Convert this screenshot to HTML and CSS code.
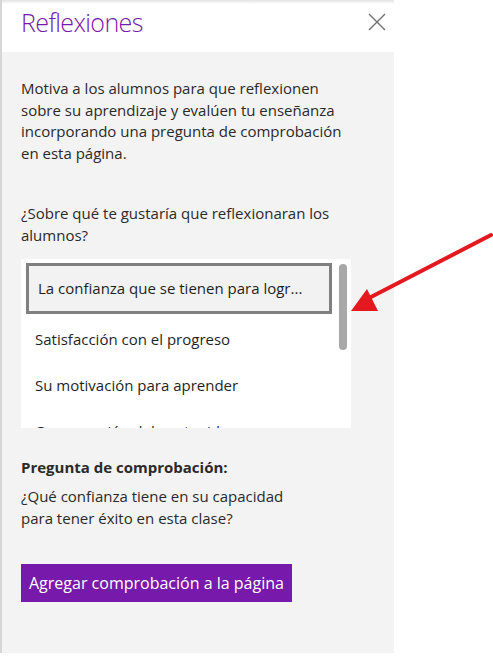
FILE: index.html
```html
<!DOCTYPE html>
<html lang="es">

<head>
    <meta charset="UTF-8">
    <meta name="viewport" content="width=device-width, initial-scale=1.0">
    <title>Reflexiones</title>
    <link rel="stylesheet" href="styles.css">
</head>

<body>
    <div class="pane">
        <div class="pane-head">
            <h1 class="pane-title">Reflexiones</h1>
            <button class="close" aria-label="Cerrar">
                <svg width="18" height="18" viewBox="0 0 18 18">
                    <path d="M1 1 L17 17 M17 1 L1 17" stroke="#707070" stroke-width="1.4" fill="none" />
                </svg>
            </button>
        </div>

        <div class="pane-body">
            <p class="intro">Motiva a los alumnos para que reflexionen sobre su aprendizaje y evalúen tu enseñanza incorporando una pregunta de comprobación en esta página.</p>

            <p class="ask">¿Sobre qué te gustaría que reflexionaran los alumnos?</p>

            <div class="choices">
                <ul class="choice-list">
                    <li class="choice selected">La confianza que se tienen para logr...</li>
                    <li class="choice">Satisfacción con el progreso</li>
                    <li class="choice">Su motivación para aprender</li>
                    <li class="choice">Comprensión del contenido</li>
                </ul>
                <div class="thumb"></div>
            </div>

            <h2 class="check-title">Pregunta de comprobación:</h2>
            <p class="check-text">¿Qué confianza tiene en su capacidad<br>para tener éxito en esta clase?</p>

            <button class="add">Agregar comprobación a la página</button>
        </div>
    </div>

    <!-- flecha roja de la captura -->
    <svg class="arrow" width="150" height="85" viewBox="0 0 150 85">
        <line x1="142" y1="4" x2="22" y2="66" stroke="#e3191f" stroke-width="4" stroke-linecap="round" />
        <polygon points="2,80 18,58 29,80" fill="#e3191f" />
    </svg>
</body>

</html>
```

FILE: styles.css
```css
* {
    margin: 0;
    padding: 0;
    box-sizing: border-box;
}

body {
    background-color: #fff;
    font-family: "Open Sans", "Liberation Sans", sans-serif;
    color: #2a2a2a;
}

.pane {
    width: 394px;
    border-left: 2px solid #d6d6d6;
}

.pane-head {
    height: 52px;
    display: flex;
    align-items: flex-start;
    justify-content: space-between;
    padding: 5px 8px 0 19px;
    background: linear-gradient(#e2e2e2, #fff 4px);
}

.pane-title {
    font-size: 25px;
    font-weight: 300;
    letter-spacing: -0.6px;
    color: #7719aa;
    line-height: 34px;
}

.close {
    border: none;
    background: none;
    margin-top: 8px;
    width: 18px;
    height: 18px;
}

.pane-body {
    background-color: #f3f3f3;
    padding: 26px 0 51px 19px;
    font-size: 15px;
    line-height: 21.7px;
}

.intro {
    width: 340px;
}

.ask {
    margin-top: 38px;
    width: 340px;
}

.choices {
    position: relative;
    width: 330px;
    height: 169px;
    margin-top: 13px;
    background-color: #fff;
    overflow: hidden;
}

.choice-list {
    list-style: none;
    padding-top: 4px;
}

.choice {
    height: 46px;
    display: flex;
    align-items: center;
    padding: 6px 0 0 14px;
    color: #1f1f1f;
    white-space: nowrap;
}

.choice.selected {
    height: 51px;
    margin: 0 19px 0 5px;
    padding: 0 0 0 9px;
    border: 3px solid #808080;
    background-color: #f2f2f2;
}

.thumb {
    position: absolute;
    top: 5px;
    right: 4px;
    width: 8px;
    height: 86px;
    border-radius: 4px;
    background-color: #a8a8a8;
}

.check-title {
    margin-top: 29px;
    font-size: 15px;
    font-weight: 700;
    line-height: 21.7px;
    margin-bottom: 7px;
}

.check-text {
    line-height: 21.7px;
}

.add {
    margin-top: 35px;
    height: 38px;
    padding: 0 8px;
    border: none;
    background-color: #7719aa;
    color: #fff;
    font-family: "Open Sans", "Liberation Sans", sans-serif;
    font-size: 16px;
}

.arrow {
    position: absolute;
    left: 349px;
    top: 231px;
}
```
